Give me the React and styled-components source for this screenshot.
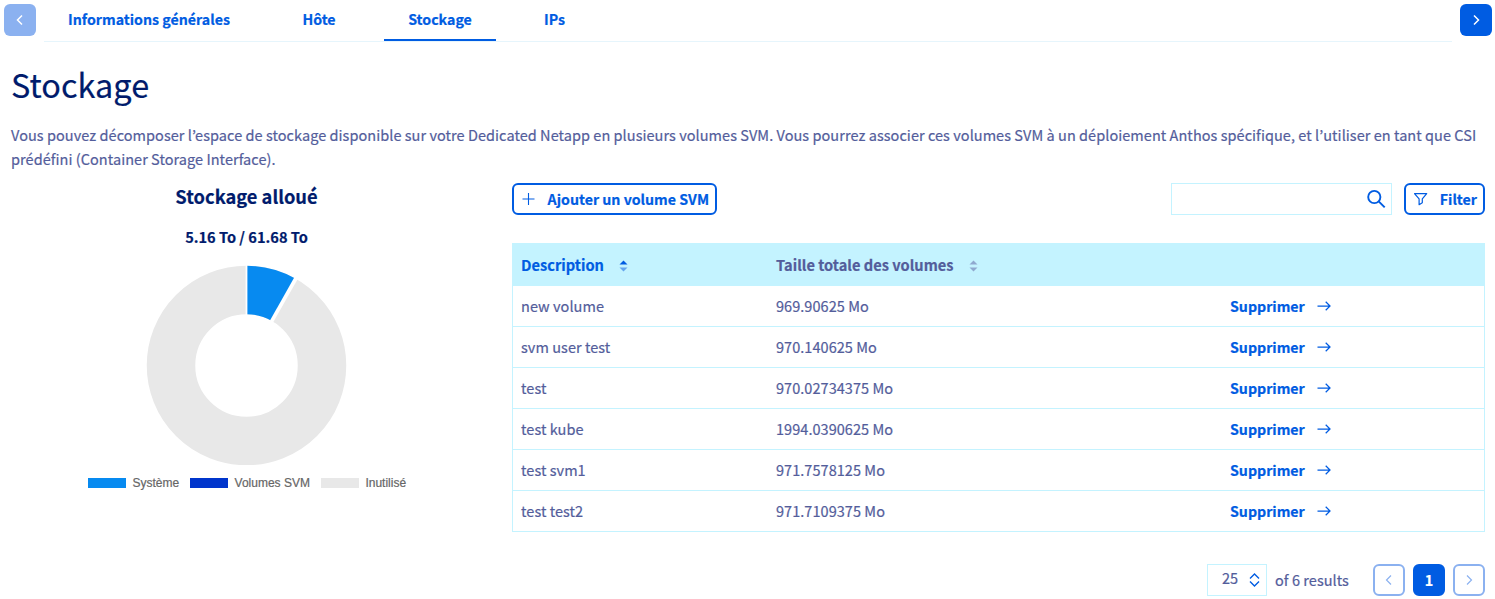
import React from "react";
import styled, { createGlobalStyle, css } from "styled-components";

const sans = `"Source Sans Pro", "Noto Sans CJK KR", sans-serif`;
const blue = "#005ce2";
const navy = "#001b6c";
const slate = "#535d9b";
const cyan = "#c4f3ff";

const GlobalStyle = createGlobalStyle`
  * { box-sizing: border-box; }
  body {
    margin: 0;
    background: #fff;
    color: ${slate};
    font: 400 14.5px/24px ${sans};
    letter-spacing: 0.048px;
    -webkit-text-stroke: 0.2px currentColor;
    overflow: hidden;
  }
  svg { display: block; flex: none; }
`;

const Page = styled.div`
  width: 1495px;
  height: 599px;
  overflow: hidden;
`;

const TabBar = styled.nav`
  display: flex;
  height: 42px;
  padding: 0 3px 0 4px;
`;

const ScrollButton = styled.button`
  width: 32px;
  height: 32px;
  margin-top: 4px;
  padding: 0;
  border: 0;
  border-radius: 6px;
  display: grid;
  place-items: center;
  color: #fff;
  background: ${(p) => (p.disabled ? "#8bb1f0" : blue)};
`;

const TabList = styled.div`
  flex: 1;
  display: flex;
  gap: 24px;
  margin: 0 8px;
  border-bottom: 1px solid #e6f5fc;
`;

const Tab = styled.a`
  width: ${(p) => p.$width}px;
  text-align: center;
  white-space: nowrap;
  height: 41px;
  padding-top: 7px;
  font-size: 14.2px;
  font-weight: 700;
  letter-spacing: 0;
  color: ${blue};
  border-bottom: 2px solid ${(p) => (p.$active ? blue : "transparent")};
`;

const Intro = styled.header`
  padding: 18px 10px 0 11px;
`;

const Title = styled.h1`
  margin: 0;
  font-size: 32.4px;
  font-weight: 400;
  line-height: 48px;
  color: ${navy};
`;

const Lead = styled.p`
  margin: 15px 0 0;
  white-space: nowrap;
`;

const Columns = styled.div`
  display: flex;
  padding: 12px 10px 0 0;
`;

const ChartPanel = styled.section`
  width: 493px;
  margin-right: 19px;
  display: flex;
  flex-direction: column;
  align-items: center;
  color: ${navy};
  letter-spacing: 0;
`;

const ChartTitle = styled.h2`
  margin: 0;
  font-size: 18.3px;
  line-height: 27px;
  font-weight: 700;
`;

const ChartTotal = styled.strong`
  margin: 15px 0 16px;
  font-size: 14.6px;
  line-height: 24px;
  font-weight: 700;
`;

const Legend = styled.ul`
  list-style: none;
  display: flex;
  gap: 11px;
  margin: 11px 0 0 1px;
  padding: 0;
  font: 12px/14px "Liberation Sans", Arial, sans-serif;
  color: #666;
`;

const LegendItem = styled.li`
  display: flex;
  align-items: center;
  gap: 6.5px;
  white-space: nowrap;
  &::before {
    content: "";
    width: 38px;
    height: 10px;
    background: ${(p) => p.$color};
  }
`;

const TablePanel = styled.section`
  width: 973px;
`;

const Toolbar = styled.div`
  display: flex;
  height: 32px;
  margin-bottom: 28px;
`;

const OutlineButton = styled.button`
  display: flex;
  align-items: center;
  width: ${(p) => p.$width}px;
  height: 32px;
  padding: 0 6px 0 8px;
  justify-content: space-between;
  white-space: nowrap;
  border: 2px solid ${blue};
  border-radius: 6px;
  background: #fff;
  font: 700 14.2px/24px ${sans};
  color: ${blue};
`;

const SearchField = styled.div`
  width: 221px;
  height: 32px;
  margin: 0 12px 0 auto;
  padding-right: 5px;
  display: flex;
  align-items: center;
  justify-content: flex-end;
  border: 1px solid ${cyan};
  color: ${blue};
`;

const Grid = styled.div`
  border: 1px solid ${cyan};
`;

const Row = styled.div`
  display: grid;
  grid-template-columns: 255px 454px 1fr;
  align-items: center;
  height: 41px;
  padding-left: 8px;
  border-bottom: 1px solid ${cyan};
  &:last-child { height: 40px; border-bottom: 0; }
  ${(p) =>
    p.$head &&
    css`
      height: 42px;
      background: ${cyan};
      font-size: 14.65px;
      font-weight: 700;
      letter-spacing: 0;
      padding-top: 1px;
    `}
`;

const HeadCell = styled.span`
  display: flex;
  align-items: center;
  gap: 15px;
  color: ${(p) => (p.$sorted ? blue : slate)};
  svg { margin-top: 1px; }
`;

const RowAction = styled.a`
  display: flex;
  align-items: center;
  gap: 12px;
  font-size: 14.2px;
  font-weight: 700;
  letter-spacing: 0;
  color: ${blue};
`;

const Pager = styled.footer`
  display: flex;
  justify-content: flex-end;
  align-items: center;
  margin-top: 32px;
  height: 32px;
`;

const PageSize = styled.div`
  width: 60px;
  height: 32px;
  padding: 0 6px 4px 14px;
  display: flex;
  align-items: center;
  justify-content: space-between;
  border: 1px solid ${cyan};
  svg { margin-top: 4px; }
`;

const ResultCount = styled.span`
  width: 98px;
  margin-left: 8px;
  white-space: nowrap;
`;

const PageButton = styled.button`
  width: 32px;
  height: 32px;
  padding: 0;
  margin-left: ${(p) => (p.$first ? 0 : 8)}px;
  display: grid;
  place-items: center;
  border: 2px solid ${(p) => (p.$current ? blue : "#8bb1f0")};
  border-radius: 6px;
  background: ${(p) => (p.$current ? blue : "#fff")};
  color: ${(p) => (p.$current ? "#fff" : "#8bb1f0")};
  font: 700 14.35px/24px ${sans};
`;

const Chevron = ({ right, weight = 1.5 }) => (
  <svg width="16" height="16" viewBox="0 0 16 16" fill="none" stroke="currentColor" strokeWidth={weight}>
    <path d={right ? "M6 3.5 10.5 8 6 12.5" : "M10 3.5 5.5 8 10 12.5"} />
  </svg>
);

const PlusIcon = () => (
  <svg width="13" height="14" viewBox="0 0 13 14" stroke="currentColor" strokeWidth="1.1">
    <path d="M.5 7h12M6.500 1v12" />
  </svg>
);

const FunnelIcon = () => (
  <svg width="14" height="14" viewBox="0 0 14 14" fill="none" stroke="currentColor" strokeWidth="1.2">
    <path d="M.5 1.600h12.200L8.300 6.800v4L5.100 12.700V6.800Z" strokeLinejoin="round" />
  </svg>
);

const SearchIcon = () => (
  <svg width="20" height="20" viewBox="0 0 20 20" fill="none" stroke="currentColor" strokeWidth="1.9">
    <circle cx="8.3" cy="8" r="6.1" />
    <path d="m12.700 12.400 6 6" />
  </svg>
);

const ArrowIcon = () => (
  <svg width="14" height="12" viewBox="0 0 14 12" fill="none" stroke="currentColor" strokeWidth="1.25">
    <path d="M.5 6h12.300M8.700 1.700 13 6l-4.300 4.300" />
  </svg>
);

const SortIcon = ({ up, down }) => (
  <svg width="9" height="12" viewBox="0 0 9 12">
    <path d="M.5 4.500 4.500.5l4 4Z" fill={up} />
    <path d="M.5 7.500h8l-4 4Z" fill={down} />
  </svg>
);

const UpDownIcon = () => (
  <svg width="11" height="14" viewBox="0 0 11 14" fill="none" stroke={blue} strokeWidth="1.4">
    <path d="M1 5.500 5.500 1 10 5.500M1 8.500 5.500 13 10 8.500" />
  </svg>
);

const Donut = () => (
  <svg width="201" height="200" viewBox="-100.500 -100.500 201 200">
    <circle r="75.500" fill="none" stroke="#e8e8e8" strokeWidth="48.500" />
    <path d="M0-99.700A99.700 99.700 0 0 1 49.200-86.700L25.300-44.600A51.300 51.300 0 0 0 0-51.300Z" fill="#078af0" />
    <path d="M0-101V-50" stroke="#fff" strokeWidth="1.800" />
    <path d="M50.200-88.500 24.400-42.800" stroke="#fff" strokeWidth="3.700" />
  </svg>
);

const tabs = [
  ["Informations générales", 210],
  ["Hôte", 82],
  ["Stockage", 112],
  ["IPs", 69],
];

const volumes = [
  ["new volume", "969.90625 Mo"],
  ["svm user test", "970.140625 Mo"],
  ["test", "970.02734375 Mo"],
  ["test kube", "1994.0390625 Mo"],
  ["test svm1", "971.7578125 Mo"],
  ["test test2", "971.7109375 Mo"],
];

export default function App() {
  return (
    <Page>
      <GlobalStyle />
      <TabBar>
        <ScrollButton disabled><Chevron /></ScrollButton>
        <TabList>
          {tabs.map(([label, width]) => (
            <Tab key={label} $width={width} $active={label === "Stockage"}>{label}</Tab>
          ))}
        </TabList>
        <ScrollButton><Chevron right /></ScrollButton>
      </TabBar>
      <Intro>
        <Title>Stockage</Title>
        <Lead>
          Vous pouvez décomposer l’espace de stockage disponible sur votre Dedicated Netapp en plusieurs volumes SVM. Vous pourrez associer ces volumes SVM à un déploiement Anthos spécifique, et l’utiliser en tant que CSI
          <br />
          prédéfini (Container Storage Interface).
        </Lead>
      </Intro>
      <Columns>
        <ChartPanel>
          <ChartTitle>Stockage alloué</ChartTitle>
          <ChartTotal>5.16 To / 61.68 To</ChartTotal>
          <Donut />
          <Legend>
            <LegendItem $color="#078af0">Système</LegendItem>
            <LegendItem $color="#0035cc">Volumes SVM</LegendItem>
            <LegendItem $color="#e8e8e8">Inutilisé</LegendItem>
          </Legend>
        </ChartPanel>
        <TablePanel>
          <Toolbar>
            <OutlineButton $width={205}><PlusIcon />Ajouter un volume SVM</OutlineButton>
            <SearchField><SearchIcon /></SearchField>
            <OutlineButton $width={81}><FunnelIcon />Filter</OutlineButton>
          </Toolbar>
          <Grid>
            <Row $head>
              <HeadCell $sorted>Description<SortIcon up={blue} down="#64a5ee" /></HeadCell>
              <HeadCell>Taille totale des volumes<SortIcon up="#8fa9cf" down="#8fa9cf" /></HeadCell>
            </Row>
            {volumes.map(([name, size]) => (
              <Row key={name}>
                <span>{name}</span>
                <span>{size}</span>
                <RowAction>Supprimer<ArrowIcon /></RowAction>
              </Row>
            ))}
          </Grid>
          <Pager>
            <PageSize>25<UpDownIcon /></PageSize>
            <ResultCount>of 6 results</ResultCount>
            <PageButton $first><Chevron weight={1.2} /></PageButton>
            <PageButton $current>1</PageButton>
            <PageButton><Chevron right weight={1.2} /></PageButton>
          </Pager>
        </TablePanel>
      </Columns>
    </Page>
  );
}
